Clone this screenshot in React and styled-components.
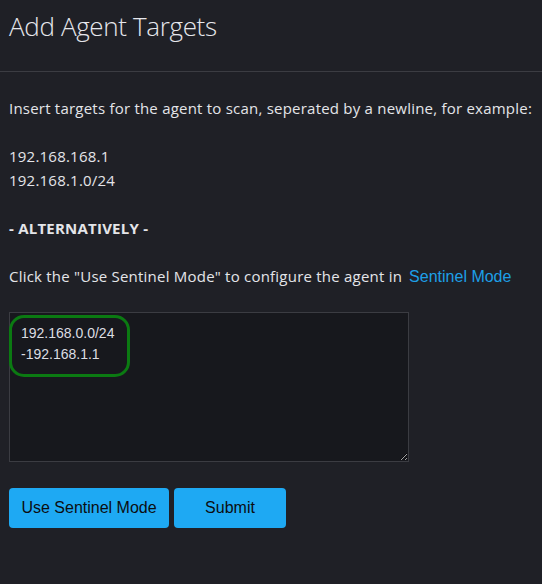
import styled, { createGlobalStyle } from 'styled-components';

const GlobalStyle = createGlobalStyle`
  html, body {
    margin: 0;
    padding: 0;
    background: #1f2026;
  }
  body {
    font-family: "Open Sans", "Noto Sans", sans-serif;
    color: #e4e5e9;
  }
`

const Page = styled.div`
  min-height: 584px;
  background: #1f2026;
`

const Header = styled.div`
  padding: 9px 9px 0;
  height: 62px;
  border-bottom: 1px solid #3b3c42;
`

const Title = styled.h1`
  margin: 0;
  font-size: 26px;
  font-weight: 300;
  line-height: 34px;
  letter-spacing: -0.35px;
  color: #e6e7ec;
`

const Body = styled.div`
  padding: 24px 9px 0;
  font-size: 15px;
  letter-spacing: 0.22px;
  line-height: 24px;
`

const Paragraph = styled.p`
  margin: 0 0 24px;
`

const Strong = styled.p`
  margin: 0 0 24px;
  font-weight: 700;
`

const LinkButton = styled.button`
  background: none;
  border: none;
  padding: 0;
  margin-left: 7px;
  font-family: "Liberation Sans", Arial, sans-serif;
  font-size: 16px;
  color: #1d9fe6;
  cursor: pointer;
  letter-spacing: 0;
`

const TargetsField = styled.div`
  position: relative;
  width: 400px;
  margin-top: 12px;
`

const TextArea = styled.textarea`
  display: block;
  box-sizing: border-box;
  width: 400px;
  height: 150px;
  padding: 10px 11px;
  background: #17181d;
  border: 1px solid #3b3c42;
  color: #dcdde2;
  font-family: "Liberation Sans", Arial, sans-serif;
  font-size: 14px;
  line-height: 21px;
  letter-spacing: 0;
  outline: none;
  resize: both;
`

const Highlight = styled.div`
  position: absolute;
  left: 0;
  top: 3px;
  width: 115px;
  height: 56px;
  border: 3px solid #0b7a12;
  border-radius: 15px;
  pointer-events: none;
`

const Actions = styled.div`
  display: flex;
  gap: 5px;
  margin-top: 26px;
`

const Button = styled.button`
  height: 40px;
  width: ${p => p.$width}px;
  border: none;
  border-radius: 4px;
  background: #1ea9f3;
  color: #0c0d10;
  font-family: "Liberation Sans", Arial, sans-serif;
  font-size: 16px;
  letter-spacing: 0;
  cursor: pointer;
`

export default function App() {
  return (
    <Page>
      <GlobalStyle />
      <Header>
        <Title>Add Agent Targets</Title>
      </Header>
      <Body>
        <Paragraph>Insert targets for the agent to scan, seperated by a newline, for example:</Paragraph>
        <Paragraph>
          192.168.168.1<br />
          192.168.1.0/24
        </Paragraph>
        <Strong>- ALTERNATIVELY -</Strong>
        <Paragraph>
          Click the "Use Sentinel Mode" to configure the agent in
          <LinkButton>Sentinel Mode</LinkButton>
        </Paragraph>
        <TargetsField>
          <TextArea defaultValue={'192.168.0.0/24\n-192.168.1.1'} />
          <Highlight />
        </TargetsField>
        <Actions>
          <Button $width={160}>Use Sentinel Mode</Button>
          <Button $width={112}>Submit</Button>
        </Actions>
      </Body>
    </Page>
  );
}
